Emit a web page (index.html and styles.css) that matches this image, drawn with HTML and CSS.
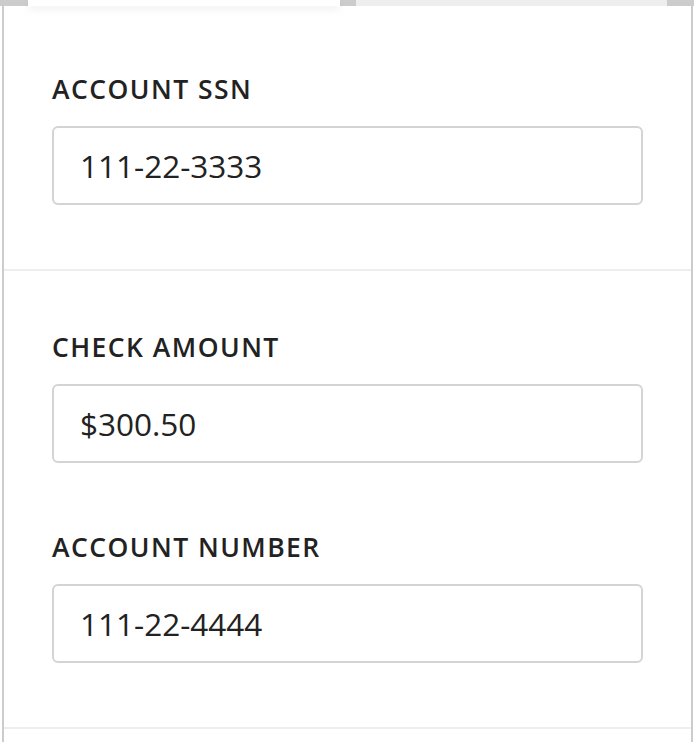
FILE: index.html
```html
<!DOCTYPE html>
<html lang="en">
<head>
<meta charset="utf-8">
<title>Check form</title>
<link rel="stylesheet" href="styles.css">
</head>
<body>
<div class="tabs">
  <div class="tab tab-active"></div>
  <div class="tab tab-inactive"></div>
</div>
<div class="panel">
  <section class="section section-first">
    <div class="field">
      <label class="label">ACCOUNT SSN</label>
      <div class="input">111-22-3333</div>
    </div>
  </section>
  <section class="section section-second">
    <div class="field">
      <label class="label">CHECK AMOUNT</label>
      <div class="input">$300.50</div>
    </div>
    <div class="field">
      <label class="label">ACCOUNT NUMBER</label>
      <div class="input">111-22-4444</div>
    </div>
  </section>
</div>
</body>
</html>
```
FILE: styles.css
```css
* { box-sizing: border-box; }
html, body {
  margin: 0;
  padding: 0;
  background: #ffffff;
  font-family: "Open Sans", "Noto Sans", sans-serif;
  color: #222222;
}
.tabs {
  display: flex;
  height: 6px;
  background: #cccccc;
  padding-left: 28px;
  position: relative;
  z-index: 1;
}
.tab {
  height: 6px;
}
.tab-active {
  width: 312px;
  background: #ffffff;
  box-shadow: 0 3px 8px rgba(0, 0, 0, 0.07);
}
.tab-inactive {
  width: 311px;
  margin-left: 16px;
  background: #eeeeee;
}
.panel {
  margin-left: 2px;
  width: 691px;
  border-left: 2px solid #cccccc;
  border-right: 2px solid #cccccc;
  min-height: 736px;
}
.section {
  padding: 0 48px;
  border-bottom: 2px solid #eeeeee;
}
.section-first {
  padding-top: 68px;
  padding-bottom: 64px;
}
.section-second {
  padding-top: 61px;
  padding-bottom: 64px;
  display: flex;
  flex-direction: column;
  gap: 69px;
}
.field {
  display: flex;
  flex-direction: column;
  gap: 22px;
}
.label {
  font-size: 26.5px;
  line-height: 30px;
  font-weight: 600;
  letter-spacing: 0.055em;
  color: #222222;
}
.input {
  height: 79px;
  border: 2px solid #d4d4d4;
  border-radius: 6px;
  padding: 0 26px;
  display: flex;
  align-items: center;
  font-size: 31.5px;
  color: #222222;
}
```
